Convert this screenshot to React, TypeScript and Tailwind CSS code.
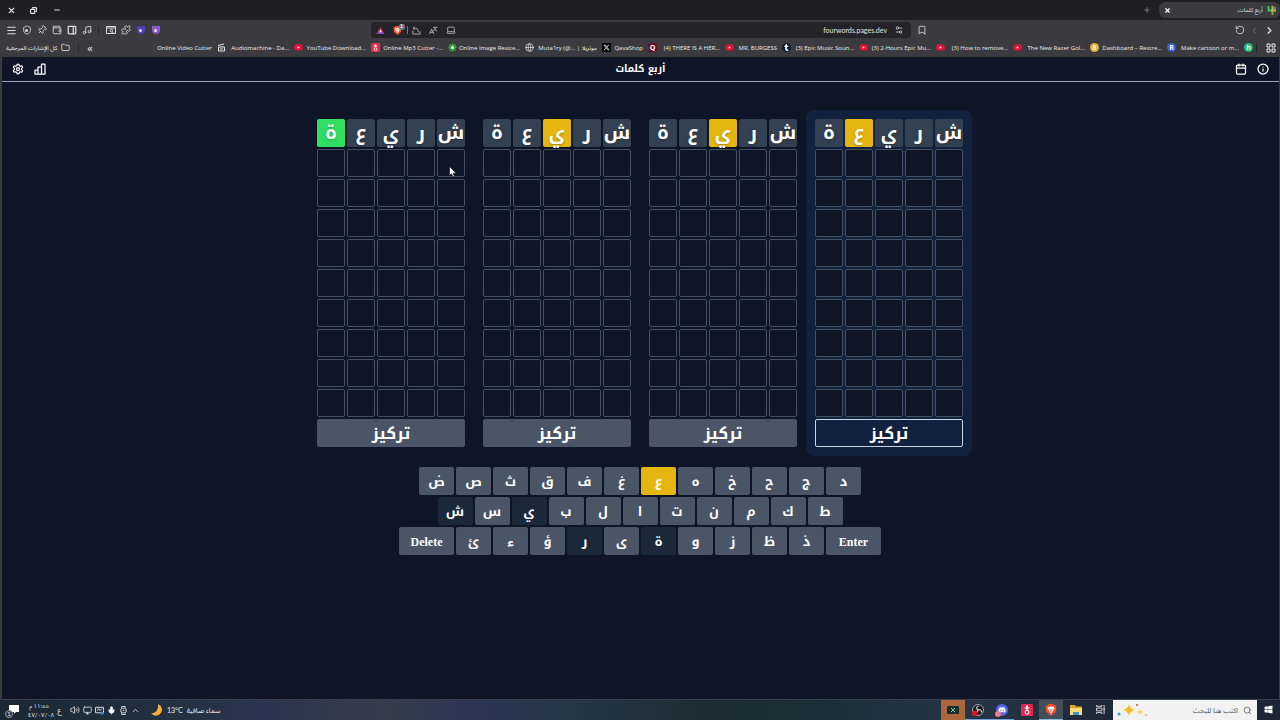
import type { ReactNode } from "react";
import {
  Menu, Pin, Wallet, PanelRight, Music, Puzzle, Folder, Settings, Info, Calendar,
  RotateCcw, ChevronLeft, ChevronRight, ChevronUp, Bookmark, X, Copy, Minus, Plus,
  Laptop, Globe, Shield, Volume2, Monitor, Mic, Search,
} from "lucide-react";
import { FaYoutube, FaDiscord, FaWindows, FaXTwitter, FaTumblr } from "react-icons/fa6";

const ui = "font-['Lato','Noto_Sans_Arabic','DejaVu_Sans',sans-serif]";
const WORD = ["ش", "ر", "ي", "ع", "ة"];

type Mark = "green" | "yellow";
const BOARDS: { hit: number; mark: Mark; focused: boolean; pointer: boolean }[] = [
  { hit: 4, mark: "green", focused: false, pointer: true },
  { hit: 2, mark: "yellow", focused: false, pointer: false },
  { hit: 2, mark: "yellow", focused: false, pointer: false },
  { hit: 3, mark: "yellow", focused: true, pointer: false },
];
const TILE: Record<Mark, string> = { green: "bg-[#30de63]", yellow: "bg-[#e4b60f]" };

function Board({ hit, mark, focused, pointer }: { hit: number; mark: Mark; focused: boolean; pointer: boolean }) {
  return (
    <section className={`rounded-lg p-2 ${focused ? "bg-[#12213d]" : ""}`}>
      <div className="grid grid-cols-[repeat(5,30px)] auto-rows-[30px]">
        {WORD.map((c, i) => (
          <div
            key={c}
            className={`m-px flex items-center justify-center rounded-xs text-[19px] leading-5 font-bold text-white text-shadow-md ${i === hit ? TILE[mark] : "bg-[#334152]"}`}
          >
            {c}
          </div>
        ))}
        {Array.from({ length: 45 }, (_, i) => (
          <div key={i} className="relative m-px rounded-xs border border-[#455163] bg-[#0e1526]">
            {pointer && i === 0 && (
              <svg viewBox="0 0 8 12" className="absolute top-4 left-[11px] h-3 w-2">
                <path d="M.5.5v9l2-1.800 1.300 3 1.500-.7-1.200-2.800h3z" fill="#fff" stroke="#111" strokeWidth=".6" />
              </svg>
            )}
          </div>
        ))}
      </div>
      <div className="flex h-[30px] p-px">
        <button
          className={`flex-1 rounded-xs border pt-px text-base leading-5 font-bold text-white ${focused ? "border-[#cbd5e1] bg-[#12213d]" : "border-[#4a5666] bg-[#4a5666]"}`}
        >
          تركيز
        </button>
      </div>
    </section>
  );
}

const ROWS = [
  ["د", "ج", "ح", "خ", "ە", "ع", "غ", "ف", "ق", "ث", "ص", "ض"],
  ["ط", "ك", "م", "ن", "ت", "ا", "ل", "ب", "ي", "س", "ش"],
  ["Enter", "ذ", "ظ", "ز", "و", "ة", "ى", "ر", "ؤ", "ء", "ئ", "Delete"],
];
const USED = ["ي", "ش", "ة", "ر"];

function Key({ label }: { label: string }) {
  const wide = label.length > 1;
  const tone = label === "ع" ? "bg-[#e4b60f]" : USED.includes(label) ? "bg-[#1b2838]" : "bg-[#4a5666]";
  return (
    <button
      className={`m-px h-7 rounded-xs pt-px font-bold text-white ${tone} ${wide ? "w-[55px] font-['Liberation_Serif',serif] text-xs" : "w-[35px] text-[13px] leading-5"}`}
    >
      {label}
    </button>
  );
}

const youtube = (
  <span className="relative flex size-[9px] items-center justify-center">
    <span className="absolute h-[4px] w-[4px] bg-white" />
    <FaYoutube className="relative size-[9px] text-[#e3103c]" />
  </span>
);
function Dot({ tone, children }: { tone: string; children?: ReactNode }) {
  return (
    <span className={`flex size-[9px] items-center justify-center text-[7px] leading-none font-bold text-white ${tone}`}>
      {children}
    </span>
  );
}
function DownloadGlyph({ size }: { size: string }) {
  return (
    <svg viewBox="0 0 12 12" className={size}>
      <rect width="12" height="12" rx="1.500" fill="#e5294f" />
      <path d="M5 1.500h2v2h1.800L6 6 3.200 3.500H5z" fill="#fff" />
      <circle cx="6" cy="8.300" r="1.900" fill="none" stroke="#fff" strokeWidth="1.100" />
    </svg>
  );
}
function Lion({ size }: { size: string }) {
  return (
    <svg viewBox="0 0 12 13" className={size}>
      <path d="M3.500 0h5L10 1.500l1.300.2.5 2-.8 5L6 13 1 8.700l-.8-5 .5-2L2 1.500z" fill="#f4502c" />
      <path d="M3 3.200 6 2.600l3 .6.6 1.300-1.200 2.300L6 10.500 3.600 6.800 2.400 4.500z" fill="#fff" />
      <path d="M4 5.200 5.400 5.600M8 5.200 6.600 5.600M6 5.500v2M5 8.200l1-.7 1 .7" stroke="#f4502c" strokeWidth=".8" fill="none" />
    </svg>
  );
}

const BOOKMARKS: { title: string; icon: ReactNode; width: string }[] = [
  { title: "Make cartoon or m...", icon: <Dot tone="rounded-full bg-[#25b877]">h</Dot>, width: "w-[77px]" },
  { title: "Dashboard – Restre...", icon: <Dot tone="rounded-full bg-[#2f62d9]">R</Dot>, width: "w-[77px]" },
  { title: "The New Razer Gol...", icon: <Dot tone="rounded-full bg-[#e9ae2b]">8</Dot>, width: "w-[77px]" },
  { title: "(3) How to remove...", icon: youtube, width: "w-[77px]" },
  { title: "(3) 2-Hours Epic Mu...", icon: youtube, width: "w-[77px]" },
  { title: "(3) Epic Music Soun...", icon: youtube, width: "w-[77px]" },
  { title: "MR. BURGESS", icon: <Dot tone="rounded-full bg-[#0b1b33]"><FaTumblr className="size-[7px]" /></Dot>, width: "w-[57px]" },
  { title: "(4) THERE IS A HER...", icon: youtube, width: "w-[77px]" },
  { title: "QavaShop", icon: <Dot tone="rounded-xs bg-[#66102c]">Q</Dot>, width: "w-[46px]" },
  { title: "Muta1ry (@... | موتريلا", icon: <Dot tone="bg-black"><FaXTwitter className="size-[7px]" /></Dot>, width: "w-[77px]" },
  { title: "Online Image Resize...", icon: <Globe className="size-[9px] text-[#e0e0e0]" />, width: "w-[77px]" },
  {
    title: "Online Mp3 Cutter -...",
    icon: (
      <svg viewBox="0 0 9 9" className="size-[9px]">
        <path d="M4.5 0 5.7 1.4 8 1.2 7.7 3.2 9 4.5 7.5 5.7 7.6 8 5.6 7.7 4.5 9 3.2 7.6 1 7.8 1.3 5.7 0 4.5 1.5 3.2 1.2 1.2 3.3 1.4z" fill="#2f9e3a" />
        <circle cx="4.5" cy="4.5" r="1.5" fill="#fff" />
      </svg>
    ),
    width: "w-[77px]",
  },
  { title: "YouTube Download...", icon: <DownloadGlyph size="size-[9px]" />, width: "w-[77px]" },
  { title: "Audiomachine - Da...", icon: youtube, width: "w-[77px]" },
  {
    title: "Online Video Cutter",
    icon: (
      <svg viewBox="0 0 9 9" className="size-[9px]" fill="none" stroke="#e6e6e6">
        <path d="M1 2.5 7 1M1.5 4h6v4h-6zM3 6h3" />
      </svg>
    ),
    width: "w-[77px]",
  },
];

function IconButton({ label, children, width = "w-[15px]" }: { label: string; children: ReactNode; width?: string }) {
  return (
    <button aria-label={label} className={`flex h-4 shrink-0 items-center justify-center ${width}`}>
      {children}
    </button>
  );
}

function BrowserChrome() {
  return (
    <header className={`${ui} bg-[#3b3b3f] text-[#dedede]`}>
      <div className="flex h-5 items-center bg-[#1f1e23]">
        <IconButton label="Close window" width="w-[22px]"><X className="size-[9px]" strokeWidth={3} /></IconButton>
        <IconButton label="Restore" width="w-[23px]"><Copy className="size-[7px] -scale-x-100" strokeWidth={4} /></IconButton>
        <IconButton label="Minimize" width="w-[23px]"><Minus className="size-[8px]" strokeWidth={3} /></IconButton>
        <div className="flex-1" />
        <IconButton label="New tab" width="w-6"><Plus className="size-[8px] text-[#a0a0a0]" /></IconButton>
        <div className="flex h-4 w-[121px] items-center gap-1 rounded-md bg-[#3b3b3f] pr-1 pl-[5px]">
          <button aria-label="Close tab"><X className="size-[7px] text-white" strokeWidth={4} /></button>
          <span className="flex-1 text-right text-[6px] leading-3">أربع كلمات</span>
          <svg viewBox="0 0 9 9" className="size-[9px] shrink-0" fill="none" strokeWidth="2">
            <path d="M1.5 0v4.500h3" stroke="#32c56a" />
            <path d="M5.5 0v5M4 4.5h5" stroke="#e4b60f" />
            <path d="M5.5 5v4" stroke="#7daf52" />
            <path d="M8 1v3" stroke="#3f93bd" />
          </svg>
        </div>
      </div>

      <div className="flex h-5 items-center">
        <div className="flex w-[371px] items-center pl-1">
          <IconButton label="Menu"><Menu className="size-[11px]" strokeWidth={2.5} /></IconButton>
          <IconButton label="VPN">
            <span className="relative flex items-center justify-center">
              <Shield className="size-[10px]" />
              <span className="absolute size-[3px] rounded-full bg-[#d8d8d8]" />
            </span>
          </IconButton>
          <IconButton label="Pin"><Pin className="size-[10px] rotate-45" /></IconButton>
          <IconButton label="Wallet"><Wallet className="size-[10px]" /></IconButton>
          <IconButton label="Sidebar"><PanelRight className="size-[10px]" strokeWidth={3} /></IconButton>
          <IconButton label="Media"><Music className="size-[10px]" /></IconButton>
          <span className="mx-1 h-2 w-px bg-[#252529]" />
          <IconButton label="Page search">
            <svg viewBox="0 0 10 10" className="size-[10px]" fill="none" stroke="currentColor">
              <path d="M.5 1.500h9v7h-9zM.5 3h9M6.500 7 8 8.500" />
              <circle cx="5.400" cy="5.700" r="1.300" />
            </svg>
          </IconButton>
          <IconButton label="Extensions"><Puzzle className="size-[10px]" /></IconButton>
          {["bg-[#5140b8]", "bg-[#8a5bcd]"].map((tone) => (
            <IconButton key={tone} label="Extension">
              <span className={`flex size-2 items-center justify-center rounded-t-xs rounded-b-full ${tone}`}>
                <span className="size-[3px] rounded-full bg-[#e6dcff]" />
              </span>
            </IconButton>
          ))}
        </div>
        <div className="flex h-4 min-w-0 flex-1 items-center rounded-sm bg-[#242428] pl-[2px]">
          <IconButton label="Rewards">
            <svg viewBox="0 0 10 10" className="size-[9px]">
              <path d="M5 1 9.5 9h-9z" fill="#d92b52" />
              <path d="M.5 9 3 6.500h4L9.500 9z" fill="#8045c4" />
              <path d="M5 4 6.500 7h-3z" fill="#fff" />
            </svg>
          </IconButton>
          <IconButton label="Brave shields" width="w-[18px]">
            <span className="relative flex">
              <Lion size="size-[9px]" />
              <span className="absolute -top-[2px] -right-[3px] flex size-[6px] items-center justify-center rounded-xs bg-[#6f7380] text-[5px] leading-none text-white">1</span>
            </span>
          </IconButton>
          <span className="mx-px h-2 w-px bg-[#77777b]" />
          <IconButton label="Share">
            <svg viewBox="0 0 10 10" className="size-[9px]" fill="none" stroke="#b8b8b8">
              <path d="M1 5v4h8V6M3 .8 1.200 2.500 3 4.200M1.200 2.500H4q3 0 3 4.500" />
            </svg>
          </IconButton>
          <IconButton label="Translate" width="w-[18px]">
            <svg viewBox="0 0 10 10" className="size-[9px]" fill="none" stroke="#b8b8b8">
              <path d="M.5 9 3 3.500 5.500 9M1.500 7h3M4.500 1.500h5M7 1.500q0 3-2 4M6 3q1 2 3 2.500" />
            </svg>
          </IconButton>
          <IconButton label="Install" width="w-[17px]"><Laptop className="size-[10px] text-[#b8b8b8]" /></IconButton>
          <input
            aria-label="Address"
            defaultValue="fourwords.pages.dev"
            className="min-w-0 flex-1 bg-transparent text-right text-[7px] leading-3 text-[#e2e2e2] outline-none"
          />
          <IconButton label="Site settings" width="w-6">
            <svg viewBox="0 0 10 10" className="size-[8px]" fill="none" stroke="currentColor">
              <path d="M5 2.500h4M1 7.500h4" />
              <circle cx="3" cy="2.500" r="1.500" />
              <circle cx="7" cy="7.500" r="1.500" />
            </svg>
          </IconButton>
        </div>
        <div className="flex w-[369px] items-center pr-[3px]">
          <IconButton label="Bookmark page" width="w-[22px]"><Bookmark className="size-[10px]" /></IconButton>
          <div className="flex-1" />
          <IconButton label="Reload"><RotateCcw className="size-[10px]" /></IconButton>
          <IconButton label="Forward"><ChevronLeft className="size-[11px] text-[#77777b]" /></IconButton>
          <IconButton label="Back"><ChevronRight className="size-[11px]" strokeWidth={3} /></IconButton>
        </div>
      </div>

      <nav dir="rtl" className="flex h-[17px] items-center overflow-hidden pr-1 pb-[2px] font-['Open_Sans','Noto_Sans_Arabic','DejaVu_Sans',sans-serif] text-[6px] leading-3 whitespace-nowrap text-[#ececec]">
        <svg viewBox="0 0 10 10" className="size-[10px] shrink-0" fill="none" stroke="currentColor">
          <path d="M1 1h3v3H1zM6 1h3v3H6zM1 6h3v3H1zM6 6h3v3H6z" strokeLinejoin="round" />
        </svg>
        <span className="mr-[9px] ml-[3px] h-2 w-px shrink-0 bg-[#252529]" />
        {BOOKMARKS.map((b) => (
          <a key={b.title} href="#bookmark" className={`flex shrink-0 items-center gap-[5px] ${b.width}`}>
            <span className="flex shrink-0">{b.icon}</span>
            <span dir="ltr">{b.title}</span>
          </a>
        ))}
        <div className="flex-1" />
        <button aria-label="More bookmarks" className="text-[11px]">»</button>
        <span className="mx-2 h-2 w-px shrink-0 bg-[#252529]" />
        <a href="#all" className="flex items-center gap-1 pl-[6px]">
          <Folder className="size-[9px]" />
          كل الإشارات المرجعية
        </a>
      </nav>
    </header>
  );
}

function Game() {
  return (
    <main dir="rtl" className="mr-px ml-[2px] flex-1 bg-[#0e1526] font-['Noto_Kufi_Arabic','Noto_Sans_Arabic','DejaVu_Sans',sans-serif] text-white">
      <div className="grid h-[25px] grid-cols-3 items-center border-b border-[#9aa3b5] px-[10px]">
        <div className="flex gap-[10px]">
          <button aria-label="معلومات"><Info className="size-3" strokeWidth={2.5} /></button>
          <button aria-label="التقويم"><Calendar className="size-3" strokeWidth={2.5} /></button>
        </div>
        <h1 className="text-center text-[10px] leading-4 font-bold">أربع كلمات</h1>
        <div className="flex justify-end gap-[10px]">
          <button aria-label="إحصائيات">
            <svg viewBox="0 0 24 24" className="size-3" fill="none" stroke="currentColor" strokeWidth="2.500" strokeLinejoin="round">
              <path d="M2 14h6v8H2zM8 8h7v14H8zM15 2h7v20h-7z" />
            </svg>
          </button>
          <button aria-label="الإعدادات"><Settings className="size-3" strokeWidth={2.5} /></button>
        </div>
      </div>
      <div className="pr-px">
        <div dir="ltr" className="flex justify-center pt-7">
          {BOARDS.map((b, i) => (
            <div key={i} dir="rtl"><Board {...b} /></div>
          ))}
        </div>
        <div className="pt-[10px]">
          {ROWS.map((row) => (
            <div key={row[0]} className="flex justify-center">
              {row.map((k) => <Key key={k} label={k} />)}
            </div>
          ))}
        </div>
      </div>
    </main>
  );
}

function Taskbar() {
  return (
    <footer
      className={`${ui} flex h-[21px] items-center border-t border-[#39404c] bg-[linear-gradient(90deg,#1b2733_0%,#22303f_13%,#2a3450_20%,#353c4a_30%,#2c3556_37%,#263545_45%,#1e2c33_55%,#1c2f38_65%,#273445_76%,#1b2533_90%)] text-[7px] leading-[9px] text-[#ececec]`}
    >
      <IconButton label="Notifications" width="w-7">
        <span className="relative">
          <svg viewBox="0 0 10 10" className="size-[10px]"><path d="M0 0h10v7H7L5 9V7H0z" fill="#fff" /></svg>
          <span className="absolute -bottom-[3px] -left-[4px] flex size-2 items-center justify-center rounded-full border border-[#999] bg-[#26313d] text-[6px] leading-none">1</span>
        </span>
      </IconButton>
      <div className="w-[22px] text-center text-[6px]"><div>١١:٥٥ م</div><div>٤٧/٠٧/٠٨</div></div>
      <span className="w-[19px] text-center text-[8px]">ع</span>
      <IconButton label="Volume" width="w-3"><Volume2 className="size-[10px]" /></IconButton>
      <IconButton label="Network" width="w-3"><Monitor className="size-[9px]" /></IconButton>
      <IconButton label="Display" width="w-3">
        <svg viewBox="0 0 10 10" className="size-[9px]" fill="none" stroke="currentColor">
          <path d="M.5 1.500h9v6h-9zM2.500 5l1.500-2 1.500 2 2-2" />
          <circle cx="8" cy="8" r="1.800" fill="#2f7fe0" stroke="none" />
        </svg>
      </IconButton>
      <IconButton label="Microphone" width="w-3"><Mic className="size-[9px] fill-white" /></IconButton>
      <IconButton label="Device" width="w-3">
        <svg viewBox="0 0 10 10" className="size-[9px]" fill="none" stroke="currentColor">
          <path d="M3 2V.5h4V2M3 8v1.500h4V8" />
          <rect x="2" y="2.500" width="6" height="5" rx="2" />
          <path d="M4 5h2" />
        </svg>
      </IconButton>
      <IconButton label="Hidden icons" width="w-3"><ChevronUp className="size-[9px]" /></IconButton>
      <div className="flex items-center gap-1 pl-[10px]">
        <svg viewBox="0 0 12 12" className="size-3"><path d="M7 0a6 6 0 1 1-7 9c4 1 8-3 7-9z" fill="#f5ae3c" /></svg>
        <span>13°C</span>
        <span dir="rtl">سماء صافية</span>
      </div>
      <div className="flex-1" />
      <TaskbarApps />
    </footer>
  );
}

function AppButton({ label, tone, width, children }: { label: string; tone: string; width: string; children: ReactNode }) {
  return (
    <button aria-label={label} className={`flex h-5 shrink-0 items-center justify-center border-b ${tone} ${width}`}>
      {children}
    </button>
  );
}

function TaskbarApps() {
  return (
    <nav className="flex h-5 items-center">
      <AppButton label="Game" tone="border-[#a9673b] bg-[#a9673b]" width="w-6">
        <svg viewBox="0 0 12 8" className="h-2 w-3">
          <rect width="12" height="8" rx="1" fill="#17302d" />
          <path d="M4 2l4 4M8 2 4 6" stroke="#7ec8a5" />
        </svg>
      </AppButton>
      <AppButton label="OBS" tone="border-[#6fa5d8]" width="w-[25px]">
        <svg viewBox="0 0 12 12" className="size-3">
          <circle cx="6" cy="6" r="5.500" fill="#19191d" stroke="#c4c4c8" strokeWidth=".8" />
          <path d="M6 6c-2-1-1.500-3.500.5-3.800M6 6c2-1 4 .5 3.500 2.500M6 6c0 2-2.500 3-4 1.500" fill="none" stroke="#d4d4d8" strokeWidth="1.200" />
          <circle cx="2.800" cy="9.200" r="2.800" fill="#e0141e" />
        </svg>
      </AppButton>
      <AppButton label="Discord" tone="border-[#6fa5d8]" width="w-6">
        <span className="relative flex size-3 items-center justify-center rounded-full bg-[#5865e8]">
          <FaDiscord className="size-2 text-white" />
          <span className="absolute -bottom-px -left-px size-[6px] rounded-full bg-[#ef7a92]" />
        </span>
      </AppButton>
      <AppButton label="Downloader" tone="border-transparent" width="w-[25px]"><DownloadGlyph size="size-3" /></AppButton>
      <AppButton label="Brave" tone="border-[#8ab8e0] bg-[#444e59]" width="w-6"><Lion size="size-3" /></AppButton>
      <AppButton label="Files" tone="border-transparent" width="w-[25px]">
        <svg viewBox="0 0 12 10" className="h-[10px] w-3">
          <path d="M0 0h5l1 1.500h6V10H0z" fill="#dca528" />
          <path d="M0 3h12v7H0z" fill="#f9dc76" />
          <path d="M3 7h6v3H3z" fill="#3f8fd4" />
        </svg>
      </AppButton>
      <AppButton label="Task view" tone="border-transparent" width="w-[25px]">
        <svg viewBox="0 0 10 10" className="size-[9px]" fill="none" stroke="#e6e6e6">
          <path d="M.5 0v1.500h6V0M.5 3.500h6v3h-6zM.5 10V8.500h6V10M9 0v10M8 4.500h2" />
        </svg>
      </AppButton>
      <label className="flex h-5 w-36 items-center bg-[#f2f2f2] pr-[5px] pl-1 text-[#555]">
        <svg viewBox="0 0 32 14" className="h-[14px] w-8 shrink-0">
          <path d="M12 1q1 5 6 6-5 1-6 6-1-5-6-6 5-1 6-6z" fill="#f3bd22" />
          <path d="M23 6q.5 2.500 3 3-2.500.5-3 3-.5-2.500-3-3 2.500-.5 3-3z" fill="#f6cf56" />
          <circle cx="2" cy="11" r="1.500" fill="#3b9ad6" />
          <circle cx="20" cy="2" r="1" fill="#b5642a" />
          <circle cx="29" cy="12" r="1" fill="#e6c266" />
        </svg>
        <input dir="rtl" aria-label="بحث" placeholder="اكتب هنا للبحث" className="min-w-0 flex-1 bg-transparent px-[5px] text-[7px] leading-3 outline-none placeholder:text-[#555]" />
        <Search className="size-[9px] shrink-0" />
      </label>
      <AppButton label="Start" tone="border-transparent" width="w-[23px]"><FaWindows className="size-[9px] text-white" /></AppButton>
    </nav>
  );
}

export default function App() {
  return (
    <div className="flex min-h-screen flex-col bg-[#3b3b3f]">
      <BrowserChrome />
      <Game />
      <Taskbar />
    </div>
  );
}
